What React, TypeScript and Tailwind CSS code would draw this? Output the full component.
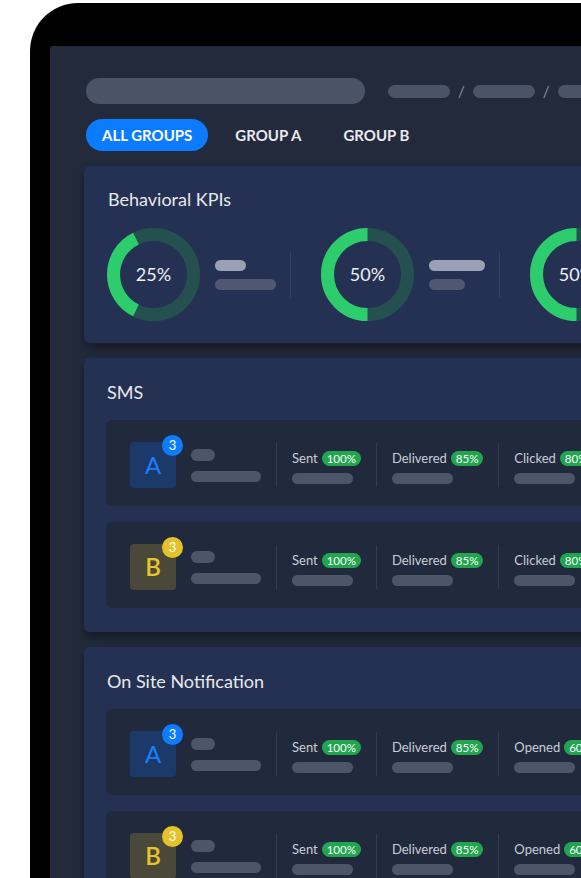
import React from "react";

const Donut = ({ label, from, to }: { label: string; from: number; to: number }) => {
  const r = 40;
  const c = 46.5;
  const pt = (a: number) => {
    const rad = (a * Math.PI) / 180;
    return `${(c + r * Math.sin(rad)).toFixed(2)} ${(c - r * Math.cos(rad)).toFixed(2)}`;
  };
  const large = to - from > 180 ? 1 : 0;
  return (
    <div className="relative h-[93px] w-[93px] shrink-0">
      <svg width="93" height="93" viewBox="0 0 93 93" className="absolute inset-0">
        <circle cx={c} cy={c} r={r} fill="none" stroke="#24504f" strokeWidth="13" />
        <path
          d={`M ${pt(from)} A ${r} ${r} 0 ${large} 1 ${pt(to)}`}
          fill="none"
          stroke="#2dcc6d"
          strokeWidth="13"
        />
      </svg>
      <span className="absolute inset-0 flex items-center justify-center text-[18px] text-[#eef0f4]">
        {label}
      </span>
    </div>
  );
};

const Kpi = ({
  label,
  from,
  to,
  top,
  bottom,
}: {
  label: string;
  from: number;
  to: number;
  top: number;
  bottom: number;
}) => (
  <div className="flex shrink-0 items-center">
    <Donut label={label} from={from} to={to} />
    <div className="ml-[15px] flex flex-col gap-[8px]">
      <div className="h-[11px] rounded-full bg-[#9aa1b4]" style={{ width: top }} />
      <div className="h-[11px] rounded-full bg-[#4f5870]" style={{ width: bottom }} />
    </div>
    <div className="ml-[14px] mr-[30px] h-[47px] w-px bg-[#34405e]" />
  </div>
);

const Stat = ({ label, pct }: { label: string; pct: string }) => (
  <div className="mt-[5px] flex shrink-0 flex-col gap-[7px]">
    <div className="flex items-center gap-[4px] whitespace-nowrap text-[13px] leading-[15px] text-[#c9cdd6]">
      {label}
      <span className="rounded-full bg-[#21a64f] px-[5px] text-[11.5px] leading-[15px] text-white">
        {pct}
      </span>
    </div>
    <div className="h-[11px] w-[61px] rounded-full bg-[#4d5568]" />
  </div>
);

const Divider = () => <div className="h-[44px] w-px shrink-0 bg-[#323b52]" />;

const Row = ({ group, last }: { group: "A" | "B"; last: string }) => (
  <div className="flex h-[86px] items-center gap-[15px] rounded-[6px] bg-[#212a3d] pl-[24px] pt-[4px]">
    <div
      className={
        group === "A"
          ? "relative flex h-[46px] w-[46px] shrink-0 items-center justify-center rounded-[4px] bg-[#1c3a69] text-[24px] text-[#1a7dff]"
          : "relative flex h-[46px] w-[46px] shrink-0 items-center justify-center rounded-[4px] bg-[#4a4838] text-[24px] font-semibold text-[#e6c42b]"
      }
    >
      {group}
      <span
        className={
          group === "A"
            ? "absolute -right-[7px] -top-[7px] flex h-[21px] w-[21px] items-center justify-center rounded-full bg-[#0f7bff] text-[13px] font-normal text-white"
            : "absolute -right-[7px] -top-[7px] flex h-[21px] w-[21px] items-center justify-center rounded-full bg-[#e5c22a] text-[13px] font-normal text-white"
        }
      >
        3
      </span>
    </div>
    <div className="flex shrink-0 flex-col gap-[10px]">
      <div className="h-[12px] w-[24px] rounded-full bg-[#4d5568]" />
      <div className="h-[11px] w-[70px] rounded-full bg-[#4d5568]" />
    </div>
    <Divider />
    <Stat label="Sent" pct="100%" />
    <Divider />
    <Stat label="Delivered" pct="85%" />
    <Divider />
    <Stat label={last} pct={last === "Clicked" ? "80%" : "60%"} />
  </div>
);

const Card = ({ title, children }: { title: string; children: React.ReactNode }) => (
  <section className="w-[640px] overflow-hidden rounded-[6px] bg-[#253152] px-[22px] pb-[24px] pt-[22px] shadow-[0_6px_10px_rgba(0,0,0,0.35)]">
    <h2 className="mb-[16px] pl-[1px] text-[18px] leading-[24px] text-[#e6e8ee]">{title}</h2>
    {children}
  </section>
);

export default function App() {
  return (
    <div className="h-[878px] w-[581px] overflow-hidden bg-white font-[Lato,sans-serif]">
      <div className="ml-[30px] mt-[3px] h-[1000px] w-[700px] rounded-tl-[48px] bg-black pl-[20px] pt-[43px]">
        <div className="flex h-full flex-col rounded-tl-[3px] bg-[#222a3c] pl-[34px] pt-[32px]">
          <div className="ml-[2px] flex items-center">
            <div className="h-[26px] w-[279px] rounded-full bg-[#4b5366]" />
            <div className="ml-[23px] h-[13px] w-[62px] rounded-full bg-[#4b5366]" />
            <span className="mx-[8px] text-[15px] text-[#8a91a0]">/</span>
            <div className="h-[13px] w-[62px] rounded-full bg-[#4b5366]" />
            <span className="mx-[8px] text-[15px] text-[#8a91a0]">/</span>
            <div className="h-[13px] w-[62px] rounded-full bg-[#4b5366]" />
          </div>

          <div className="ml-[2px] mt-[15px] flex items-center gap-[11px] text-[15px] font-bold text-[#e9ebf0]">
            <span className="flex h-[32px] items-center rounded-full bg-[#0b7bff] px-[16px] text-white">
              ALL GROUPS
            </span>
            <span className="px-[16px]">GROUP A</span>
            <span className="px-[15px]">GROUP B</span>
          </div>

          <div className="mt-[15px] flex flex-col gap-[15px]">
            <section className="w-[640px] overflow-hidden rounded-[6px] bg-[#253152] pb-[22px] pl-[23px] pt-[21px] shadow-[0_6px_10px_rgba(0,0,0,0.35)]">
              <h2 className="mb-[17px] pl-[1px] text-[18px] leading-[24px] text-[#e6e8ee]">
                Behavioral KPIs
              </h2>
              <div className="flex">
                <Kpi label="25%" from={206} to={334} top={31} bottom={61} />
                <Kpi label="50%" from={180} to={360} top={56} bottom={36} />
                <Kpi label="50%" from={180} to={360} top={56} bottom={36} />
              </div>
            </section>

            <Card title="SMS">
              <div className="flex flex-col gap-[16px]">
                <Row group="A" last="Clicked" />
                <Row group="B" last="Clicked" />
              </div>
            </Card>

            <Card title="On Site Notification">
              <div className="flex flex-col gap-[16px]">
                <Row group="A" last="Opened" />
                <Row group="B" last="Opened" />
              </div>
            </Card>
          </div>
        </div>
      </div>
    </div>
  );
}
